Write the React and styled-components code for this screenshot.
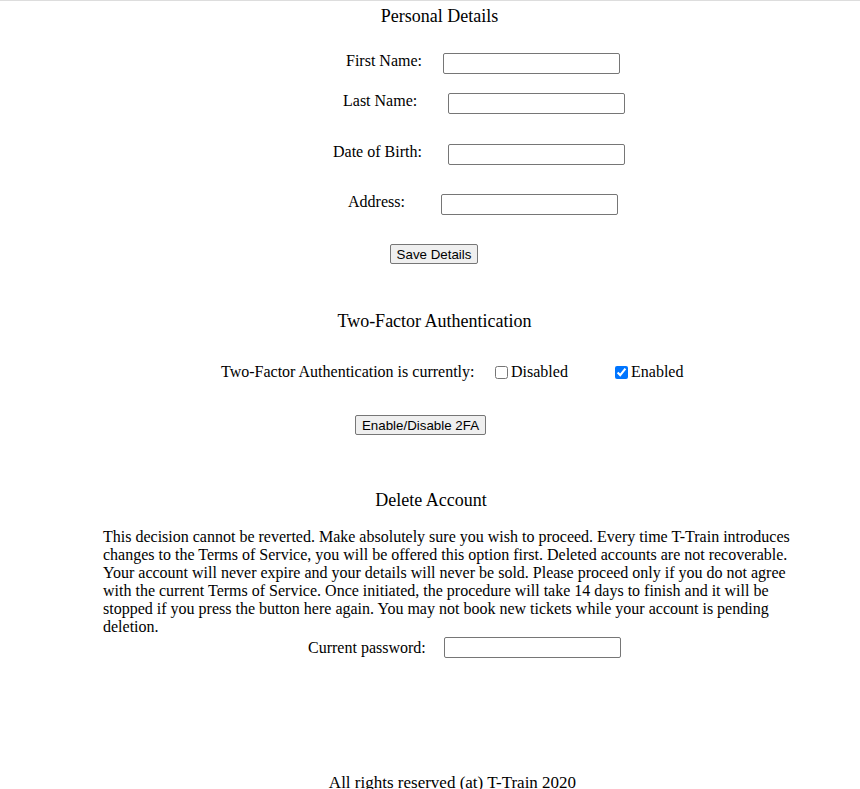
import React from "react";
import styled, { createGlobalStyle } from "styled-components";

const GlobalStyle = createGlobalStyle`
  html, body {
    margin: 0;
    padding: 0;
    overflow: hidden;
    background: #ffffff;
  }
  body {
    font-family: "Liberation Serif", "Times New Roman", serif;
    font-size: 16px;
    color: #000000;
  }
`;

const Page = styled.div`
  width: 860px;
  border-top: 1px solid #dddddd;
  display: flex;
  flex-direction: column;
`;

const Section = styled.section`
  display: flex;
  flex-direction: column;
`;

const Heading = styled.h2`
  margin: ${(p) => p.$top}px 0 0;
  font-size: 18px;
  font-weight: normal;
  line-height: 21px;
  text-align: center;
  padding-left: ${(p) => (p.$shift > 0 ? p.$shift * 2 : 0)}px;
  padding-right: ${(p) => (p.$shift < 0 ? -p.$shift * 2 : 0)}px;
`;

const FieldRow = styled.div`
  display: grid;
  grid-template-columns: ${(p) => p.$inputX}px 177px;
  align-items: ${(p) => p.$align || "start"};
  margin-top: ${(p) => p.$top}px;
`;

const Label = styled.label`
  padding-left: ${(p) => p.$x}px;
  white-space: nowrap;
  line-height: ${(p) => p.$lh || "normal"};
`;

const TextInput = styled.input`
  box-sizing: border-box;
  width: 177px;
  height: 21px;
  margin: 0;
  padding: 1px 2px;
  border: 1px solid #767676;
  border-radius: 2px;
  background: #ffffff;
  font-family: "Liberation Sans", Arial, sans-serif;
  font-size: 13.333px;
`;

const ButtonRow = styled.div`
  display: flex;
  justify-content: center;
  margin-top: ${(p) => p.$top}px;
  padding-left: ${(p) => (p.$shift > 0 ? p.$shift * 2 : 0)}px;
  padding-right: ${(p) => (p.$shift < 0 ? -p.$shift * 2 : 0)}px;
`;

const Button = styled.button`
  box-sizing: border-box;
  height: 20px;
  margin: 0;
  padding: 1px 6px;
  border: 1px solid #767676;
  border-radius: 2px;
  background: #efefef;
  color: #000000;
  font-family: "Liberation Sans", Arial, sans-serif;
  font-size: 13.333px;
  line-height: normal;
`;

const ToggleRow = styled.div`
  display: grid;
  grid-template-columns: 274px 120px auto;
  padding-left: 221px;
  margin-top: ${(p) => p.$top}px;
  line-height: normal;
  white-space: nowrap;
`;

const Option = styled.label`
  display: inline-flex;
  align-items: center;
`;

const Check = styled.input`
  width: 13px;
  height: 13px;
  margin: 1px 3px 0 0;
`;

const Notice = styled.p`
  margin: ${(p) => p.$top}px 0 0;
  padding: 0 57px 0 103px;
  line-height: 18px;
`;

const Footer = styled.footer`
  margin-top: ${(p) => p.$top}px;
  text-align: center;
  padding-left: 45px;
  font-size: 17px;
  line-height: 18px;
`;

const personalFields = [
  { label: "First Name:", labelX: 346, inputX: 443, top: 26 },
  { label: "Last Name:", labelX: 343, inputX: 448, top: 19 },
  { label: "Date of Birth:", labelX: 333, inputX: 448, top: 30 },
  { label: "Address:", labelX: 348, inputX: 441, top: 29 },
];

export default function App() {
  return (
    <>
      <GlobalStyle />
      <Page>
        <Section>
          <Heading $top={5} $shift={9.5}>Personal Details</Heading>
          {personalFields.map((f) => (
            <FieldRow key={f.label} $inputX={f.inputX} $top={f.top}>
              <Label $x={f.labelX} $lh="15px">{f.label}</Label>
              <TextInput type="text" />
            </FieldRow>
          ))}
          <ButtonRow $top={29} $shift={4}>
            <Button type="button">Save Details</Button>
          </ButtonRow>
        </Section>

        <Section>
          <Heading $top={47} $shift={4.5}>Two-Factor Authentication</Heading>
          <ToggleRow $top={31}>
            <span>Two-Factor Authentication is currently:</span>
            <Option>
              <Check type="checkbox" readOnly />
              Disabled
            </Option>
            <Option>
              <Check type="checkbox" defaultChecked />
              Enabled
            </Option>
          </ToggleRow>
          <ButtonRow $top={34} $shift={-9.5}>
            <Button type="button">Enable/Disable 2FA</Button>
          </ButtonRow>
        </Section>

        <Section>
          <Heading $top={55} $shift={1}>Delete Account</Heading>
          <Notice $top={17}>
            This decision cannot be reverted. Make absolutely sure you wish to
            proceed. Every time T-Train introduces changes to the Terms of
            Service, you will be offered this option first. Deleted accounts are
            not recoverable. Your account will never expire and your details
            will never be sold. Please proceed only if you do not agree with the
            current Terms of Service. Once initiated, the procedure will take 14
            days to finish and it will be stopped if you press the button here
            again. You may not book new tickets while your account is pending
            deletion.
          </Notice>
          <FieldRow $inputX={444} $top={1} $align="center">
            <Label $x={308}>Current password:</Label>
            <TextInput type="password" />
          </FieldRow>
        </Section>

        <Footer $top={116}>All rights reserved (at) T-Train 2020</Footer>
      </Page>
    </>
  );
}
